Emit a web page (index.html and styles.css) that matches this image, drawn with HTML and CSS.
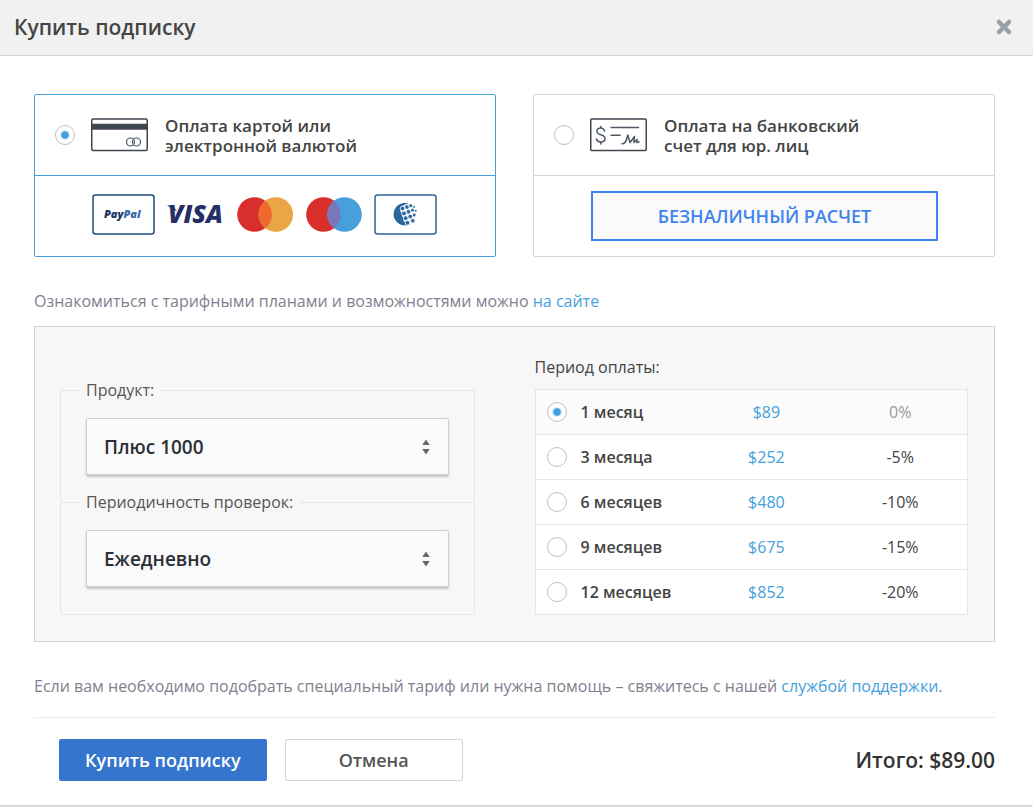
FILE: index.html
```html
<!DOCTYPE html>
<html lang="ru">
<head>
<meta charset="utf-8">
<meta name="viewport" content="width=device-width, initial-scale=1">
<title>Купить подписку</title>
<link rel="stylesheet" href="styles.css">
</head>
<body>
<form class="modal">
  <header class="modal-header">
    <h1 class="modal-title">Купить подписку</h1>
    <button class="close" type="button" aria-label="Закрыть">
      <svg width="16" height="16" viewBox="0 0 16 16"><path d="M3 3l10 10M13 3L3 13" stroke="#97a0a8" stroke-width="4.500" stroke-linecap="round" fill="none"/></svg>
    </button>
  </header>
  <main class="modal-body">
    <div class="methods">
      <section class="method method-active">
        <label class="method-head">
          <input class="radio" type="radio" name="method" checked>
          <svg width="57" height="34" viewBox="0 0 57 34" fill="none">
            <rect x=".75" y="1" width="55.5" height="31.500" rx="1.5" stroke="#3f4650" stroke-width="1.5"/>
            <path d="M1 8.800h55" stroke="#3f4650" stroke-width="6"/>
            <circle cx="39.500" cy="24" r="4" stroke="#4e5866" stroke-width="1.200"/>
            <circle cx="45.500" cy="24" r="4" stroke="#4e5866" stroke-width="1.200"/>
          </svg>
          <span class="method-name">Оплата картой или<br>электронной валютой</span>
        </label>
        <div class="method-body logos">
          <svg width="63" height="41" viewBox="0 0 63 41" role="img" aria-label="PayPal">
            <rect x="1" y="1" width="61" height="39" rx="2.500" fill="#fff" stroke="#1f4a7c" stroke-width="1.500"/>
            <text class="paypal" x="12" y="24"><tspan fill="#1d3566">Pay</tspan><tspan fill="#376ba5">Pal</tspan></text>
          </svg>
          <svg width="58" height="41" viewBox="0 0 58 41" role="img" aria-label="VISA">
            <path d="M0 11.500h6l4 6z" fill="#252f66"/>
            <text class="visa" x="1" y="29">VISA</text>
          </svg>
          <svg width="57" height="41" viewBox="0 0 57 41">
            <circle cx="17.500" cy="20.500" r="17.300" fill="#d82e2c"/>
            <circle cx="38.800" cy="20.500" r="17.300" fill="#eaa544"/>
            <path d="M28.150 6.800a17.300 17.300 0 0 1 0 27.400a17.300 17.300 0 0 1 0-27.400z" fill="#ee692d"/>
          </svg>
          <svg width="56" height="41" viewBox="0 0 56 41">
            <circle cx="17.500" cy="20.500" r="17.300" fill="#d82e2c"/>
            <circle cx="38.500" cy="20.500" r="17.300" fill="#479fdc"/>
            <path d="M28 6.800a17.300 17.300 0 0 1 0 27.400a17.300 17.300 0 0 1 0-27.400z" fill="#7b76ba"/>
          </svg>
          <svg width="63" height="41" viewBox="0 0 63 41" role="img" aria-label="WebMoney">
            <rect x="1" y="1" width="61" height="39" rx="2.500" fill="#fff" stroke="#2f669c" stroke-width="1.500"/>
            <path d="M35 9.700A11.300 11.300 0 1 0 36 30.300L31 28L26 14Q29 10.500 35 9.700z" fill="#2b669f"/>
            <g stroke="#fff" stroke-width=".8" fill="#2b669f">
              <circle cx="28.500" cy="14.500" r="2.300"/><circle cx="33" cy="13" r="2.300"/><circle cx="36.700" cy="11.700" r="1.900"/>
              <circle cx="30" cy="19.500" r="2.400"/><circle cx="34.500" cy="17.800" r="2.300"/><circle cx="38.500" cy="16.200" r="1.900"/>
              <circle cx="31.700" cy="24.200" r="2.400"/><circle cx="36.200" cy="22.500" r="2.300"/><circle cx="40.200" cy="21" r="1.900"/>
              <circle cx="33.500" cy="28.800" r="2.300"/><circle cx="38.800" cy="26.800" r="2.200"/>
            </g>
            <g fill="#2b669f"><circle cx="40" cy="12.800" r="1"/><circle cx="41.800" cy="16.800" r="1"/></g>
            <g fill="#fff"><circle cx="31.500" cy="16" r=".9"/><circle cx="33" cy="21" r=".9"/><circle cx="34.500" cy="25.700" r=".9"/><circle cx="36" cy="15" r=".8"/><circle cx="37.400" cy="19.500" r=".8"/><circle cx="27.200" cy="17" r=".9"/><circle cx="28.900" cy="22" r=".9"/><circle cx="30.400" cy="26.700" r=".9"/></g>
          </svg>
        </div>
      </section>
      <section class="method">
        <label class="method-head">
          <input class="radio" type="radio" name="method">
          <svg width="57" height="34" viewBox="0 0 57 34" fill="none" stroke="#4e5866" stroke-width="1.500" stroke-linecap="round" stroke-linejoin="round">
            <rect x=".75" y="1" width="55.500" height="31.500" rx="1" stroke="#3f4650"/>
            <path d="M14.500 13Q13.500 10 10.800 10Q7 10 7 13Q7 15.800 10.800 16.800Q15 17.800 15 20.800Q15 24 10.800 24Q7.300 24 6.500 21M10.800 8.500v1.500M10.800 24v2"/>
            <path d="M21 9.500h27.500M21 17.200h9M32 25.800Q35.500 25.500 36.500 21.500L37.800 17L40 24.500L44.500 18.500L43.800 24.500L47 21.500L46.800 24.500L49 23.800"/>
          </svg>
          <span class="method-name">Оплата на банковский<br>счет для юр. лиц</span>
        </label>
        <div class="method-body">
          <button class="invoice" type="button">БЕЗНАЛИЧНЫЙ РАСЧЕТ</button>
        </div>
      </section>
    </div>

    <p class="note">Ознакомиться с тарифными планами и возможностями можно <a class="link" href="#plans">на сайте</a></p>

    <div class="panel">
      <div class="options">
        <fieldset class="group">
          <legend class="legend"><label for="product">Продукт:</label></legend>
          <div class="select-wrap">
            <select class="select" id="product"><option>Плюс 1000</option></select>
            <svg class="arrows" width="8" height="16" viewBox="0 0 8 16" fill="#666"><path d="M4 0.500L7.700 6H.3zM4 15.500L.3 10h7.400z"/></svg>
          </div>
        </fieldset>
        <fieldset class="group">
          <legend class="legend"><label for="frequency">Периодичность проверок:</label></legend>
          <div class="select-wrap">
            <select class="select" id="frequency"><option>Ежедневно</option></select>
            <svg class="arrows" width="8" height="16" viewBox="0 0 8 16" fill="#666"><path d="M4 0.500L7.700 6H.3zM4 15.500L.3 10h7.400z"/></svg>
          </div>
        </fieldset>
      </div>
      <table class="periods">
        <caption class="caption">Период оплаты:</caption>
        <tbody>
          <tr class="row-active"><th class="term" scope="row"><label class="term-label"><input class="radio" type="radio" name="period" checked>1 месяц</label></th><td class="price">$89</td><td class="rate rate-zero">0%</td></tr>
          <tr><th class="term" scope="row"><label class="term-label"><input class="radio" type="radio" name="period">3 месяца</label></th><td class="price">$252</td><td class="rate">-5%</td></tr>
          <tr><th class="term" scope="row"><label class="term-label"><input class="radio" type="radio" name="period">6 месяцев</label></th><td class="price">$480</td><td class="rate">-10%</td></tr>
          <tr><th class="term" scope="row"><label class="term-label"><input class="radio" type="radio" name="period">9 месяцев</label></th><td class="price">$675</td><td class="rate">-15%</td></tr>
          <tr><th class="term" scope="row"><label class="term-label"><input class="radio" type="radio" name="period">12 месяцев</label></th><td class="price">$852</td><td class="rate">-20%</td></tr>
        </tbody>
      </table>
    </div>

    <p class="note note-support">Если вам необходимо подобрать специальный тариф или нужна помощь – свяжитесь с нашей <a class="link" href="#support">службой поддержки</a>.</p>

    <footer class="footer">
      <button class="btn btn-primary" type="submit">Купить подписку</button>
      <button class="btn btn-cancel" type="button">Отмена</button>
      <strong class="total">Итого: $89.00</strong>
    </footer>
  </main>
</form>
</body>
</html>
```

FILE: styles.css
```css
* {
  box-sizing: border-box;
}

body {
  margin: 0;
  background: #fff;
  color: #444;
  font: 16px/24px "Open Sans", "Noto Sans", sans-serif;
}

button,
select {
  font: inherit;
}

svg {
  flex: none;
  display: block;
}

.modal-title,
.method-name,
.invoice,
.select,
.btn,
.total {
  font-weight: 600;
}

.modal {
  border-bottom: 2px solid #d8d8d8;
  border-radius: 0 4px 4px 0;
}

.modal-header {
  display: flex;
  align-items: center;
  justify-content: space-between;
  height: 56px;
  padding: 0 21px 1px 14px;
  background: #f1f1f1;
  border-bottom: 1px solid #d3d3d3;
  border-top-right-radius: 4px;
}

.modal-title {
  margin: 0;
  font-size: 21px;
}

.close {
  padding: 0;
  border: 0;
  background: none;
}

.modal-body {
  padding: 38px 38px 24px 34px;
}

.methods {
  display: grid;
  grid-template-columns: 1fr 1fr;
  gap: 37px;
}

.method {
  --line: #d4d4d4;
  border: 1px solid var(--line);
  border-radius: 2px;
}

.method-active {
  --line: #449fde;
}

.method-head {
  display: flex;
  align-items: center;
  gap: 16px;
  height: 81px;
  padding: 0 20px;
  border-bottom: 1px solid var(--line);
}

.method-name {
  padding: 2px 0 0 1px;
  font-size: 17px;
  line-height: 20px;
}

.method-body {
  display: flex;
  align-items: center;
  height: 80px;
  padding: 0 56px 0 57px;
}

.logos {
  gap: 12px;
  padding-bottom: 3px;
}

.paypal,
.visa {
  font-style: italic;
}

.paypal {
  font-size: 11px;
  font-weight: 800;
}

.visa {
  font-size: 25px;
  font-weight: 800;
  fill: #252f66;
}

.radio {
  appearance: none;
  flex: none;
  width: 20px;
  height: 20px;
  margin: 0;
  border: 1px solid #bfbfbf;
  border-radius: 50%;
  background: #fff;
}

.radio:checked {
  background: radial-gradient(circle, #429fdf 0 3px, #fff 5px);
}

.invoice {
  flex: 1;
  height: 50px;
  border: 2px solid #3f83ee;
  background: #fafafa;
  color: #3f83ee;
  font-size: 18px;
}

.note {
  margin: 32px 0 13px;
  color: #82808f;
}

.note-support {
  margin: 32px 0 19px;
}

.link {
  color: #459fdc;
  text-decoration: none;
}

.panel {
  display: grid;
  grid-template-columns: 415fr 434fr;
  gap: 60px;
  align-items: end;
  padding: 28px 26px 26px 25px;
  background: #f7f7f7;
  border: 1px solid #d0d0d0;
}

.group {
  min-width: 0;
  margin: 0;
  padding: 16px 25px 27px;
  border: 1px solid #e6e6e6;
  border-bottom: 0;
  border-radius: 2px 2px 0 0;
}

/* The legend overlaps the previous group so that the side lines join. */
.group + .group {
  margin-top: -12px;
  border-bottom: 1px solid #e6e6e6;
  border-radius: 0 0 2px 2px;
}

.legend {
  margin-left: -6px;
  padding: 0 6px;
  color: #555;
}

.select-wrap {
  position: relative;
}

.select {
  appearance: none;
  display: block;
  width: 100%;
  height: 57px;
  padding: 0 40px 0 17px;
  border: 1px solid #d2d2d2;
  border-radius: 2px;
  background: #fafafa;
  box-shadow: 0 2px 2px #c4c4c4;
  color: #2a3036;
  font-size: 19px;
}

.arrows {
  position: absolute;
  top: 21px;
  right: 19px;
  pointer-events: none;
}

.periods {
  width: 100%;
  table-layout: fixed;
  border-collapse: collapse;
  background: #fff;
}

.caption {
  padding-bottom: 10px;
  text-align: left;
}

.periods tr {
  height: 45px;
  border: 1px solid #e6e6e6;
}

.row-active {
  background: #fbfbfb;
}

.term {
  width: 38%;
  padding: 0 0 0 11px;
  font-weight: 600;
  text-align: left;
}

.term-label {
  display: flex;
  align-items: center;
  gap: 14px;
}

.price,
.rate {
  padding: 0;
  text-align: center;
}

.price {
  color: #459fdc;
}

.rate-zero {
  color: #999;
}

.footer {
  display: flex;
  align-items: center;
  gap: 18px;
  padding: 21px 0 0 25px;
  border-top: 1px solid #ebebeb;
}

.btn {
  height: 42px;
  border-radius: 2px;
  font-size: 18px;
}

.btn-primary {
  padding: 0 26px;
  border: 0;
  background: #3575cd;
  color: #fff;
}

.btn-cancel {
  padding: 0 53px;
  border: 1px solid #d4d4d4;
  background: #fff;
  color: #555;
}

.total {
  margin-left: auto;
  color: #333;
  font-size: 21px;
}
```
